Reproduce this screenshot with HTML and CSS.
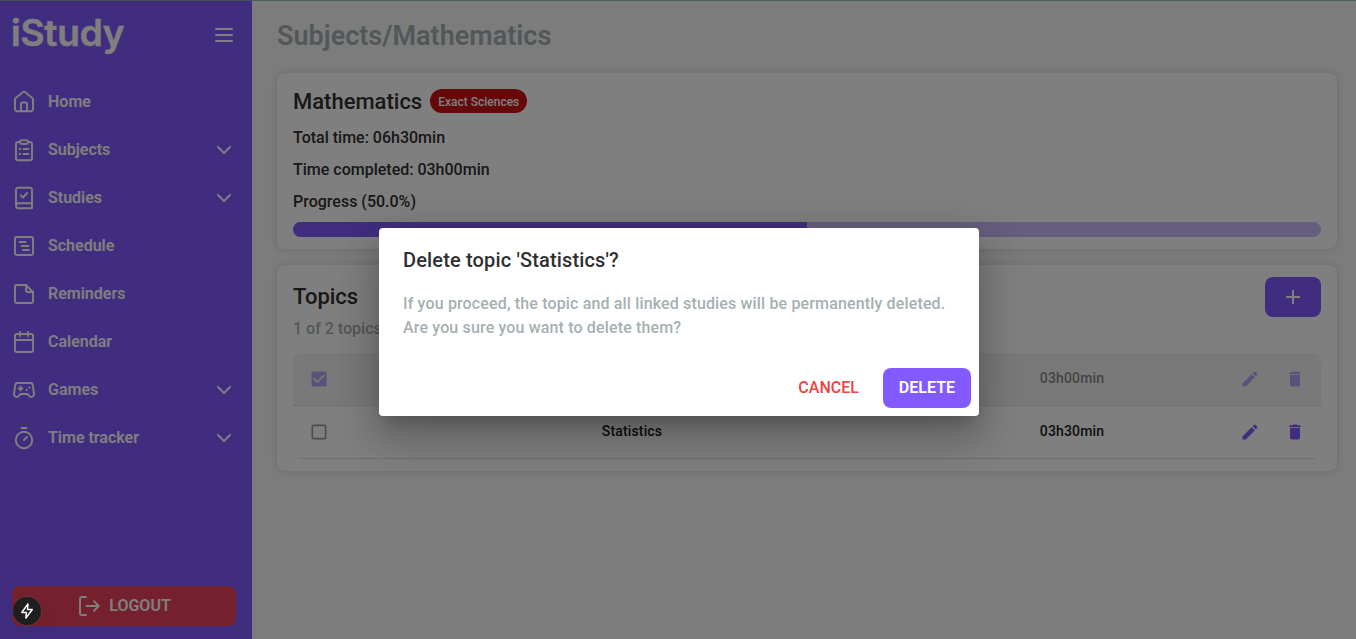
FILE: index.html
```html
<!DOCTYPE html>
<html lang="en">
<head>
<meta charset="utf-8">
<title>iStudy</title>
<link rel="stylesheet" href="styles.css">
</head>
<body>
<div class="app">
  <aside class="sidebar">
    <div class="brand">
      <span class="logo">iStudy</span>
      <svg class="burger" viewBox="0 0 24 24"><path d="M4 6h16M4 12h16M4 18h16"/></svg>
    </div>
    <nav class="nav">
      <a class="item"><svg viewBox="0 0 24 24"><path d="M3 9.600a2 2 0 0 1 .75-1.600l7-5.700a2 2 0 0 1 2.500 0l7 5.700a2 2 0 0 1 .75 1.600V19a2.200 2.200 0 0 1-2.200 2.200H5.200A2.200 2.200 0 0 1 3 19z"/><path d="M9 21v-7a1.500 1.500 0 0 1 1.500-1.500h3A1.500 1.500 0 0 1 15 14v7"/></svg><span>Home</span></a>
      <a class="item"><svg viewBox="0 0 24 24"><path d="M8 4H6a2 2 0 0 0-2 2v14.300a2 2 0 0 0 2 2h12a2 2 0 0 0 2-2V6a2 2 0 0 0-2-2h-2"/><rect x="8" y="2.300" width="8" height="3.700" rx="1.500"/><path d="M11.500 11h5M11.500 16h5M7.500 11h.7M7.500 16h.7"/></svg><span>Subjects</span><svg class="chev" viewBox="0 0 24 24"><path d="M6 9l6 6 6-6"/></svg></a>
      <a class="item"><svg viewBox="0 0 24 24"><path d="M4 19.500V4a2.200 2.200 0 0 1 2.200-2.200H18A2 2 0 0 1 20 4v18.200H6.500A2.500 2.500 0 0 1 4 19.700a2.500 2.500 0 0 1 2.500-2.500H20"/><path d="M8.700 9.300l2.300 2.200 4.200-4.500"/></svg><span>Studies</span><svg class="chev" viewBox="0 0 24 24"><path d="M6 9l6 6 6-6"/></svg></a>
      <a class="item"><svg viewBox="0 0 24 24"><rect x="3" y="3" width="18" height="18" rx="2"/><path d="M7.500 8h6M9.500 12h7M11 16h6"/></svg><span>Schedule</span></a>
      <a class="item"><svg viewBox="0 0 24 24"><path d="M14 3H5a2 2 0 0 0-2 2v14a2 2 0 0 0 2 2h14a2 2 0 0 0 2-2v-9z"/><path d="M14 3v5a2 2 0 0 0 2 2h5"/></svg><span>Reminders</span></a>
      <a class="item"><svg viewBox="0 0 24 24"><rect x="3" y="4" width="18" height="18" rx="2"/><path d="M3 10h18M8 2v4M16 2v4"/></svg><span>Calendar</span></a>
      <a class="item"><svg viewBox="0 0 24 24"><path d="M5.600 5h12.800a2.500 2.500 0 0 1 2.400 2.100l1.200 8.900a2.700 2.700 0 0 1-4.600 2.100L15.500 16h-7l-1.900 2.100A2.700 2.700 0 0 1 2 16L3.200 7.100A2.500 2.500 0 0 1 5.600 5z"/><path d="M8.500 8.500v4M6.500 10.500h4M14.600 12h.3M17.300 9.500h.3"/></svg><span>Games</span><svg class="chev" viewBox="0 0 24 24"><path d="M6 9l6 6 6-6"/></svg></a>
      <a class="item"><svg viewBox="0 0 24 24"><circle cx="12" cy="14" r="8.200"/><path d="M9.500 2h5M12 14l3-3"/></svg><span>Time tracker</span><svg class="chev" viewBox="0 0 24 24"><path d="M6 9l6 6 6-6"/></svg></a>
    </nav>
    <button class="logout"><svg viewBox="0 0 24 24"><path d="M9 3H5a2 2 0 0 0-2 2v14a2 2 0 0 0 2 2h4M9.500 12H21.500M17 7.200l4.700 4.800-4.700 4.800"/></svg>LOGOUT</button>
  </aside>

  <main class="main">
    <h1 class="page-title">Subjects/Mathematics</h1>
    <section class="card subject">
      <div class="subject-head"><h2>Mathematics</h2><span class="chip">Exact Sciences</span></div>
      <p>Total time: 06h30min</p>
      <p>Time completed: 03h00min</p>
      <p>Progress (50.0%)</p>
      <div class="bar"><div class="bar-fill" style="width:50%"></div></div>
    </section>
    <section class="card topics">
      <div class="topics-head">
        <div><h2>Topics</h2><div class="sub">1 of 2 topics</div></div>
        <button class="add"><svg viewBox="0 0 24 24"><path d="M19 13h-6v6h-2v-6H5v-2h6V5h2v6h6z"/></svg></button>
      </div>
      <div class="table">
        <div class="row done">
          <svg class="check on" viewBox="0 0 24 24"><path d="M19 3H5c-1.110 0-2 .9-2 2v14c0 1.100.89 2 2 2h14c1.110 0 2-.9 2-2V5c0-1.100-.89-2-2-2zm-9 14l-5-5 1.410-1.410L10 14.170l7.590-7.590L19 8l-9 9z"/></svg>
          <span class="name"></span><span class="time">03h00min</span>
          <span class="actions"><svg viewBox="0 0 24 24"><path d="M3 17.460v3.040c0 .28.22.5.5.5h3.040c.13 0 .26-.05.35-.15L17.810 9.940l-3.750-3.750L3.150 17.100c-.1.1-.15.22-.15.36zM20.710 7.040a1 1 0 0 0 0-1.410l-2.340-2.340a1 1 0 0 0-1.410 0l-1.830 1.830 3.750 3.750z"/></svg><svg viewBox="0 0 24 24"><path d="M6 19c0 1.100.9 2 2 2h8c1.100 0 2-.9 2-2V7H6zM18 4h-2.500l-.71-.71c-.18-.18-.44-.29-.7-.29H9.910c-.26 0-.52.110-.7.290L8.500 4H6c-.55 0-1 .45-1 1s.45 1 1 1h12c.55 0 1-.45 1-1s-.45-1-1-1z"/></svg></span>
        </div>
        <div class="row last">
          <svg class="check" viewBox="0 0 24 24"><path d="M19 5v14H5V5h14m0-2H5c-1.100 0-2 .9-2 2v14c0 1.100.9 2 2 2h14c1.100 0 2-.9 2-2V5c0-1.100-.9-2-2-2z"/></svg>
          <span class="name">Statistics</span><span class="time">03h30min</span>
          <span class="actions"><svg viewBox="0 0 24 24"><path d="M3 17.460v3.040c0 .28.22.5.5.5h3.040c.13 0 .26-.05.35-.15L17.810 9.940l-3.750-3.750L3.150 17.100c-.1.1-.15.22-.15.36zM20.710 7.040a1 1 0 0 0 0-1.410l-2.340-2.340a1 1 0 0 0-1.410 0l-1.830 1.830 3.750 3.750z"/></svg><svg viewBox="0 0 24 24"><path d="M6 19c0 1.100.9 2 2 2h8c1.100 0 2-.9 2-2V7H6zM18 4h-2.500l-.71-.71c-.18-.18-.44-.29-.7-.29H9.910c-.26 0-.52.110-.7.290L8.500 4H6c-.55 0-1 .45-1 1s.45 1 1 1h12c.55 0 1-.45 1-1s-.45-1-1-1z"/></svg></span>
        </div>
      </div>
    </section>
  </main>
</div>

<div class="backdrop">
  <div class="dialog" role="dialog">
    <h2 class="dialog-title">Delete topic 'Statistics'?</h2>
    <p class="dialog-text">If you proceed, the topic and all linked studies will be permanently deleted. Are you sure you want to delete them?</p>
    <div class="dialog-actions"><button class="btn cancel">CANCEL</button><button class="btn delete">DELETE</button></div>
  </div>
</div>
<div class="dev"><svg viewBox="0 0 24 24"><path d="M13.300 2.500L5 14h6.200l-.7 7.500L19 10h-6.300z"/></svg></div>
<div class="top-line"></div>
</body>
</html>
```

FILE: styles.css
```css
* { box-sizing: border-box; }
body, h1, h2, p { margin: 0; }
body {
  height: 639px;
  overflow: hidden;
  font-family: Roboto, "Liberation Sans", sans-serif;
  font-size: 16px;
  font-weight: 500;
  line-height: 24px;
  color: #303030;
}
button { border: 0; padding: 0; font: inherit; }
svg { display: block; flex: none; }

.app { display: flex; height: 639px; background: #f9f9f9; }

.sidebar {
  width: 252px;
  padding: 0 16px 13px 12px;
  display: flex;
  flex-direction: column;
  background: #835aff;
  color: #fff;
}
.brand { display: flex; justify-content: space-between; height: 78px; }
.logo {
  margin-top: 9px;
  margin-left: -1px;
  font: 600 37px/48px Inter, sans-serif;
  letter-spacing: -0.2px;
  -webkit-text-stroke: 0.5px #fff;
}
.burger { width: 24px; height: 24px; margin-top: 23px; }
.sidebar svg {
  fill: none;
  stroke: #fff;
  stroke-width: 1.9;
  stroke-linecap: round;
  stroke-linejoin: round;
}
.sidebar .burger { stroke-width: 2; }
.nav { flex: 1; }
.item { display: flex; align-items: center; gap: 12px; height: 48px; font-weight: 600; }
.item svg { width: 24px; height: 24px; }
.item span { flex: 1; }
.logout {
  display: flex;
  align-items: center;
  justify-content: center;
  gap: 8px;
  height: 40px;
  border-radius: 8px;
  background: #ea405a;
  color: #fff;
  font-weight: 600;
}
.logout svg { width: 24px; height: 24px; }

.main { flex: 1; padding: 20px 19px 0 25px; }
.page-title { font-size: 27px; line-height: 32px; font-weight: 600; color: #a5b0b3; }
.card { border-radius: 8px; background: #fff; box-shadow: 0 0 10px rgba(0, 0, 0, .15); }
.subject { margin-top: 21px; height: 176px; padding: 16px; }
.subject-head { display: flex; align-items: center; gap: 8px; height: 24px; margin-bottom: 13px; }
.card h2 { padding-top: 1px; font-size: 22px; line-height: 24px; font-weight: 500; }
.chip {
  height: 24px;
  padding: 1px 8px 0;
  border-radius: 12px;
  background: #cc1014;
  color: #fff;
  font-size: 12px;
}
.subject p { height: 24px; margin-bottom: 8px; }
.bar { height: 15px; border-radius: 8px; overflow: hidden; background: #cdbdff; }
.bar-fill { height: 100%; background: #835aff; }

.topics { margin-top: 16px; height: 206px; padding: 12px 16px; }
.topics-head { display: flex; justify-content: space-between; height: 76px; }
.topics-head h2 { margin-top: 7px; }
.sub { margin-top: 8px; color: #a5b0b3; }
.add { width: 56px; height: 40px; border-radius: 8px; background: #835aff; display: grid; place-items: center; }
.add svg { width: 24px; height: 24px; fill: #fff; }
.row {
  display: grid;
  grid-template-columns: 199px 280px 160px 280px 1fr;
  align-items: center;
  height: 53px;
  border-bottom: 1px solid #e0e0e0;
  font-size: 14px;
  letter-spacing: .15px;
  color: #202020;
}
.done { border-radius: 8px 8px 0 0; background: #f3f3f3; color: #888; }
.last { border-image: linear-gradient(90deg, transparent 5px, #e0e0e0 8px calc(100% - 8px), transparent calc(100% - 5px)) 1; }
.check { width: 20px; height: 20px; margin-left: 16px; fill: #9b9b9b; }
.check.on { fill: #b9a3f8; }
.name, .time { padding-bottom: 2px; text-align: center; }
.time { grid-column: 4; }
.actions { display: flex; gap: 25px; padding-left: 28px; }
.actions svg { width: 20px; height: 20px; fill: #835aff; }
.done .actions svg { fill: #b9a3f8; }

.backdrop {
  position: absolute;
  inset: 0;
  display: flex;
  justify-content: center;
  align-items: flex-start;
  padding: 228px 0 0 2px;
  background: rgba(0, 0, 0, .5);
}
.dialog {
  width: 600px;
  height: 188px;
  border-radius: 4px;
  background: #fff;
  box-shadow: 0 11px 15px -7px rgba(0, 0, 0, .2), 0 24px 38px 3px rgba(0, 0, 0, .14), 0 9px 46px 8px rgba(0, 0, 0, .12);
}
.dialog-title { padding: 16px 24px; font-size: 20px; line-height: 32px; font-weight: 500; letter-spacing: .15px; }
.dialog-text { padding: 0 24px 20px; color: #a5b0b3; letter-spacing: .15px; }
.dialog-actions { display: flex; justify-content: flex-end; gap: 8px; padding: 8px; }
.btn { height: 40px; padding: 0 16px; border-radius: 8px; background: none; }
.cancel { color: #ee4444; }
.delete { background: #835aff; color: #fff; font-weight: 600; }

.dev {
  position: absolute;
  left: 13px;
  top: 597px;
  width: 28px;
  height: 28px;
  display: grid;
  place-items: center;
  border-radius: 50%;
  background: #1e1e1e;
  box-shadow: 0 0 0 1px rgba(80, 80, 80, .4), 0 16px 32px -8px rgba(0, 0, 0, .24);
}
.dev svg { width: 18px; height: 18px; fill: none; stroke: #fff; stroke-width: 2; stroke-linejoin: round; }
.top-line { position: absolute; inset: 0 0 auto; height: 1px; background: rgba(60, 90, 84, .8); }
```
